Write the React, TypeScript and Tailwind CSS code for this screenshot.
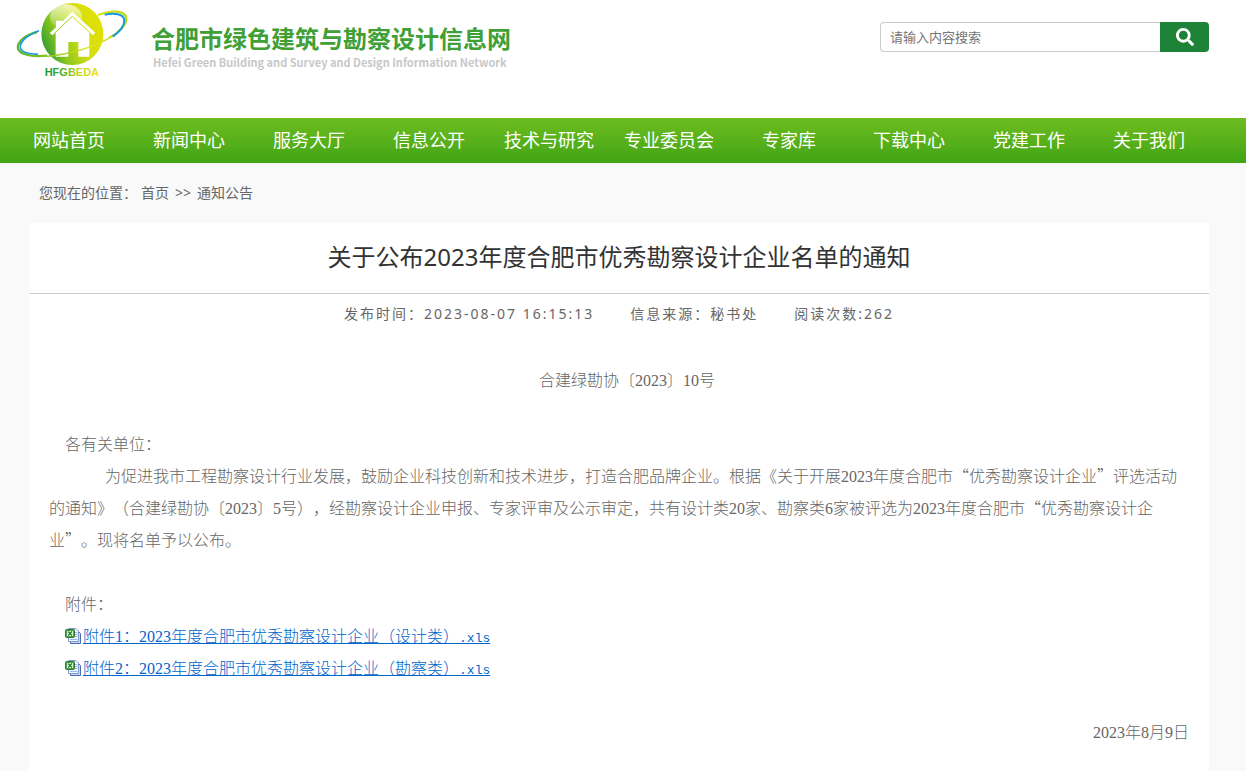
import type { ReactNode } from 'react';
import { FaSearch } from 'react-icons/fa';

const navItems = [
  '网站首页',
  '新闻中心',
  '服务大厅',
  '信息公开',
  '技术与研究',
  '专业委员会',
  '专家库',
  '下载中心',
  '党建工作',
  '关于我们',
];

const attachments = [
  { id: 1, name: '年度合肥市优秀勘察设计企业（设计类）' },
  { id: 2, name: '年度合肥市优秀勘察设计企业（勘察类）' },
];

// Half-width digits inside the article text
const Num = ({ children }: { children: ReactNode }) => (
  <span className="font-['Liberation_Serif','Noto_Sans_CJK_SC',serif] leading-none">{children}</span>
);

const Logo = () => (
  <svg viewBox="0 0 375 246" className="h-[82px] w-[125px] shrink-0" role="img" aria-label="HFGBEDA">
    <defs>
      <linearGradient id="ball" x1="0" y1="0.7" x2="1" y2="0.3">
        <stop offset="0" stopColor="#2f9a32" />
        <stop offset="0.28" stopColor="#8cc81e" />
        <stop offset="0.6" stopColor="#d3df10" />
        <stop offset="1" stopColor="#e3e000" />
      </linearGradient>
      <linearGradient id="shine" x1="0" y1="0" x2="0" y2="1">
        <stop offset="0" stopColor="#fff" stopOpacity="0.7" />
        <stop offset="1" stopColor="#fff" stopOpacity="0.1" />
      </linearGradient>
      <linearGradient id="ring" gradientUnits="userSpaceOnUse" x1="20" y1="0" x2="355" y2="0">
        <stop offset="0" stopColor="#5cb32a" />
        <stop offset="0.3" stopColor="#8cc81e" />
        <stop offset="0.65" stopColor="#e6e61a" />
        <stop offset="1" stopColor="#bcd81c" />
      </linearGradient>
      <linearGradient id="word" x1="0" y1="0" x2="1" y2="0">
        <stop offset="0" stopColor="#149a3a" />
        <stop offset="0.35" stopColor="#4fae2c" />
        <stop offset="0.6" stopColor="#c3d51b" />
        <stop offset="1" stopColor="#eee21a" />
      </linearGradient>
    </defs>
    <circle cx="187" cy="102" r="93" fill="url(#ball)" />
    <ellipse cx="168" cy="50" rx="48" ry="37" fill="url(#shine)" />
    <path
      d="M119 100 L138 82 V62 H158 V64 L187 35 L256 98 L248 106 L238 98 V170 H205 V126 H175 V170 H137 V98 L129 106 Z"
      fill="#fff"
    />
    <path d="M187 49 L129 104" stroke="#9ccc1c" strokeWidth="3" fill="none" />
    <path d="M187 49 L246 104" stroke="#d5df12" strokeWidth="3" fill="none" />
    {/* orbit: green outer edge, blue inner edge */}
    <g fill="none">
      <path d="M82 96 C40 106 20 130 24 146 C30 166 74 171 112 167" stroke="url(#ring)" strokeWidth="7" />
      <path d="M108 169 C180 164 262 138 306 109" stroke="url(#ring)" strokeWidth="4" />
      <path d="M264 45 C306 30 345 31 349 54 C352 72 328 98 298 113" stroke="url(#ring)" strokeWidth="7" />
      <path d="M87 92 C54 103 28 126 31 143 C34 157 58 162 84 163" stroke="#139be0" strokeWidth="5" />
      <path d="M284 44 C314 38 340 42 343 60 C344 76 330 94 308 110" stroke="#139be0" strokeWidth="6" />
    </g>
    <text
      x="104"
      y="228"
      fontSize="33"
      fontWeight="700"
      fontFamily="'Liberation Sans', sans-serif"
      fill="url(#word)"
    >
      HFGBEDA
    </text>
  </svg>
);

const XlsIcon = () => (
  <svg viewBox="0 0 16 16" className="mt-0.5 mr-0.5 h-4 w-4 shrink-0" aria-hidden="true">
    <path d="M5.5 3.5 H13.5 L15.5 5.5 V15.5 H5.5 Z" fill="#c9d8f2" stroke="#4a6cae" />
    <path d="M3.5 0.5 H11 L13.5 3 V13.5 H3.5 Z" fill="#f3f7fe" stroke="#7f9bd0" />
    <path d="M10 4.5 H12.5 M10 6.5 H12.5 M10 8.5 H12.5 M5 11.5 H12.5" stroke="#9db4de" />
    <rect x="0.5" y="1.5" width="9" height="8" rx="1" fill="#4ba14c" stroke="#2d7d33" />
    <rect x="2" y="3" width="6" height="5" fill="#edf7ea" />
    <path d="M3 3.5 L7 7.5 M7 3.5 L3 7.5" stroke="#23802c" strokeWidth="1.4" />
  </svg>
);

export default function App() {
  return (
    <div
      lang="zh-CN"
      className="flex min-h-screen flex-col bg-[#f9f9f9] font-['Noto_Sans','Noto_Sans_CJK_SC',sans-serif] text-sm text-[#666] [text-spacing-trim:space-all]"
    >
      {/* Header */}
      <header className="flex h-[118px] items-start justify-between bg-white pl-[10px] pr-[37px]">
        <a href="#" className="flex items-start">
          <Logo />
          <span className="mt-[22px] ml-4 flex flex-col gap-0.5 font-['Noto_Sans_CJK_SC',sans-serif] font-bold">
            <span className="text-2xl leading-8 text-[#40a035]">合肥市绿色建筑与勘察设计信息网</span>
            <span className="pl-0.5 text-[11px] leading-3 text-[#c8c8c8]">
              Hefei Green Building and Survey and Design Information Network
            </span>
          </span>
        </a>
        <form className="mt-[22px] flex h-[30px]" onSubmit={(e) => e.preventDefault()}>
          <input
            type="text"
            aria-label="搜索"
            placeholder="请输入内容搜索"
            className="w-[280px] rounded-l border border-r-0 border-[#ccc] bg-white px-[9px] text-[13px] outline-none placeholder:text-[#757575]"
          />
          <button
            type="submit"
            aria-label="搜索"
            className="flex w-[49px] items-center justify-center rounded-r bg-[#1e8336] text-white"
          >
            <FaSearch className="h-[18px] w-[18px]" />
          </button>
        </form>
      </header>

      {/* Navigation */}
      <nav className="h-[45px] bg-linear-to-b from-[#6dbd1f] to-[#40a415] pl-[9px] pr-[37px]">
        <ul className="grid h-full grid-cols-10">
          {navItems.map((item) => (
            <li key={item}>
              <a href="#" className="block text-center text-lg leading-[45px] whitespace-nowrap text-white">
                {item}
              </a>
            </li>
          ))}
        </ul>
      </nav>

      {/* Breadcrumb */}
      <div className="flex h-[60px] items-center gap-1 pl-[39px]">
        <span>您现在的位置：</span>
        <a href="#">首页</a>
        <span className="px-0.5">&gt;&gt;</span>
        <a href="#">通知公告</a>
      </div>

      {/* Article */}
      <main className="mr-[37px] ml-[29px] flex-1 bg-white pb-6">
        <h1 className="border-b border-[#ccc] pb-0.5 text-center text-2xl leading-[68px] text-[#333]">
          关于公布2023年度合肥市优秀勘察设计企业名单的通知
        </h1>
        <div className="flex h-10 items-center justify-center gap-9 tracking-[2px]">
          <span>发布时间：2023-08-07 16:15:13</span>
          <span>信息来源：秘书处</span>
          <span>阅读次数:262</span>
        </div>

        <article className="px-5 pt-[29px] font-['Noto_Sans_CJK_SC',sans-serif] text-base leading-8 font-light">
          <p className="indent-4 text-center">
            合建绿勘协〔<Num>2023</Num>〕<Num>10</Num>号
          </p>
          <p className="mt-8 indent-4">各有关单位：</p>
          <p className="indent-14">
            为促进我市工程勘察设计行业发展，鼓励企业科技创新和技术进步，打造合肥品牌企业。根据《关于开展
            <Num>2023</Num>年度合肥市“优秀勘察设计企业”评选活动的通知》（合建绿勘协〔<Num>2023</Num>〕
            <Num>5</Num>号），经勘察设计企业申报、专家评审及公示审定，共有设计类<Num>20</Num>家、勘察类
            <Num>6</Num>家被评选为<Num>2023</Num>年度合肥市“优秀勘察设计企业”。现将名单予以公布。
          </p>
          <p className="mt-8 indent-4">附件：</p>
          <ul className="pl-4">
            {attachments.map((file) => (
              <li key={file.id} className="flex items-center">
                <XlsIcon />
                <a href="#" className="text-[#0066cc] underline">
                  附件<Num>{file.id}</Num>：<Num>2023</Num>
                  {file.name}
                  <span className="font-['Liberation_Mono',monospace] text-[13px] leading-none">.xls</span>
                </a>
              </li>
            ))}
          </ul>
          <p className="mt-8 text-right">
            <Num>2023</Num>年<Num>8</Num>月<Num>9</Num>日
          </p>
        </article>
      </main>
    </div>
  );
}
